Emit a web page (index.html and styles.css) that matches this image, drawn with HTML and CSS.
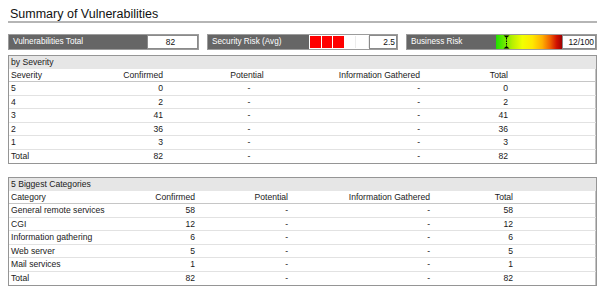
FILE: index.html
```html
<!DOCTYPE html>
<html>
<head>
<meta charset="utf-8">
<link rel="stylesheet" href="styles.css">
</head>
<body>
<div class="page">
  <div class="title">Summary of Vulnerabilities</div>

  <div class="stats">
    <div class="stat stat-total">
      <div class="stat-label">Vulnerabilities Total</div>
      <div class="stat-value center">82</div>
    </div>
    <div class="stat stat-sec">
      <div class="stat-label">Security Risk (Avg)</div>
      <div class="cells">
        <span class="cell on"></span><span class="cell on"></span><span class="cell on"></span><span class="cell"></span><span class="cell"></span>
      </div>
      <div class="stat-value">2.5</div>
    </div>
    <div class="stat stat-biz">
      <div class="stat-label">Business Risk</div>
      <div class="gradient">
        <svg class="marker" width="7" height="14" viewBox="0 0 7 14">
          <path d="M0.5 0.5 H6.5 L3.5 3 Z" fill="#000"/>
          <path d="M0.5 13.5 H6.5 L3.5 11 Z" fill="#000"/>
          <path d="M3.5 3 V11" stroke="#000" stroke-width="1" stroke-dasharray="1.5 1"/>
        </svg>
      </div>
      <div class="stat-value">12/100</div>
    </div>
  </div>

  <div class="tbl tbl-sev">
    <div class="tbl-head">by Severity</div>
    <div class="row cols">
      <div class="l">Severity</div><div class="r">Confirmed</div><div class="c">Potential</div><div class="r">Information Gathered</div><div class="r">Total</div>
    </div>
    <div class="row"><div class="l">5</div><div class="r">0</div><div class="c dash">-</div><div class="r">-</div><div class="r">0</div></div>
    <div class="row"><div class="l">4</div><div class="r">2</div><div class="c dash">-</div><div class="r">-</div><div class="r">2</div></div>
    <div class="row"><div class="l">3</div><div class="r">41</div><div class="c dash">-</div><div class="r">-</div><div class="r">41</div></div>
    <div class="row"><div class="l">2</div><div class="r">36</div><div class="c dash">-</div><div class="r">-</div><div class="r">36</div></div>
    <div class="row"><div class="l">1</div><div class="r">3</div><div class="c dash">-</div><div class="r">-</div><div class="r">3</div></div>
    <div class="row last"><div class="l">Total</div><div class="r">82</div><div class="c dash">-</div><div class="r">-</div><div class="r">82</div></div>
  </div>

  <div class="tbl tbl-cat">
    <div class="tbl-head">5 Biggest Categories</div>
    <div class="row cols">
      <div class="l">Category</div><div class="r">Confirmed</div><div class="r">Potential</div><div class="r">Information Gathered</div><div class="r">Total</div>
    </div>
    <div class="row"><div class="l">General remote services</div><div class="r">58</div><div class="r">-</div><div class="r">-</div><div class="r">58</div></div>
    <div class="row"><div class="l">CGI</div><div class="r">12</div><div class="r">-</div><div class="r">-</div><div class="r">12</div></div>
    <div class="row"><div class="l">Information gathering</div><div class="r">6</div><div class="r">-</div><div class="r">-</div><div class="r">6</div></div>
    <div class="row"><div class="l">Web server</div><div class="r">5</div><div class="r">-</div><div class="r">-</div><div class="r">5</div></div>
    <div class="row"><div class="l">Mail services</div><div class="r">1</div><div class="r">-</div><div class="r">-</div><div class="r">1</div></div>
    <div class="row last"><div class="l">Total</div><div class="r">82</div><div class="r">-</div><div class="r">-</div><div class="r">82</div></div>
  </div>
</div>
</body>
</html>
```

FILE: styles.css
```css
* { box-sizing: border-box; }
html, body { margin: 0; padding: 0; background: #fff; }
body {
  font-family: "Liberation Sans", Arial, sans-serif;
  color: #1a1a1a;
}
.page {
  width: 602px;
  padding: 0 5px 0 8px;
}
.title {
  font-size: 12.5px;
  line-height: 13px;
  padding: 8px 0 0 2px;
  height: 23px;
  border-bottom: 2px solid #b5b5b5;
  color: #111;
}
.stats {
  margin-top: 11px;
  display: grid;
  grid-template-columns: 191px 191px 191px;
  column-gap: 8px;
}
.stat {
  display: flex;
  height: 16px;
  border: 1px solid #9c9c9c;
  background: #666;
}
.stat-label {
  color: #fff;
  font-size: 8.2px;
  line-height: 14px;
  padding-left: 4px;
  white-space: nowrap;
}
.stat-total .stat-label { flex: 0 0 138px; }
.stat-sec .stat-label { flex: 0 0 101px; }
.stat-biz .stat-label { flex: 0 0 89px; }
.stat-value {
  flex: 1;
  background: #fff;
  border: 1px solid #8a8a8a;
  font-size: 8.4px;
  line-height: 12px;
  text-align: right;
  padding-right: 1px;
  color: #111;
}
.stat-value.center { text-align: center; padding-right: 4px; }
.cells {
  flex: 0 0 60px;
  display: flex;
  background: #fff;
  padding: 1px 0 1px 1px;
  gap: 1px;
}
.cell {
  flex: 1;
  background: #fff;
  border-right: 1px solid #ececec;
}
.cell.on { background: #ff0000; border-right: none; }
.gradient {
  flex: 0 0 66px;
  position: relative;
  background: linear-gradient(to right, #1fe000 0%, #5be800 10%, #b8f000 25%, #f2ff00 40%, #ffe800 55%, #ffb000 70%, #f06000 82%, #d01000 92%, #a00000 100%);
}
.marker {
  position: absolute;
  left: 7px;
  top: 0;
}
.tbl {
  border: 1px solid #959595;
  box-shadow: inset -1px 0 0 #c4c4c4;
  font-size: 8.6px;
  color: #1a1a1a;
}
.tbl-sev { margin-top: 5px; }
.tbl-cat { margin-top: 13px; }
.tbl-head {
  background: #e6e6e6;
  height: 13px;
  line-height: 13px;
  padding-left: 2px;
}
.row {
  display: grid;
  height: 13.5px;
  line-height: 13px;
  border-bottom: 1px solid #e2e2e2;
  white-space: nowrap;
}
.row.cols { border-bottom: 1px solid #c6c6c6; height: 13px; }
.row.last { border-bottom: none; }
.tbl-sev .row { grid-template-columns: 91px 63px 168px 89px 88px 1fr; }
.tbl-cat .row { grid-template-columns: 121px 65px 93px 142px 83px 1fr; }
.l { padding-left: 2px; text-align: left; }
.r { text-align: right; }
.c { text-align: center; }
.tbl-sev .dash { padding-left: 4px; }
```
